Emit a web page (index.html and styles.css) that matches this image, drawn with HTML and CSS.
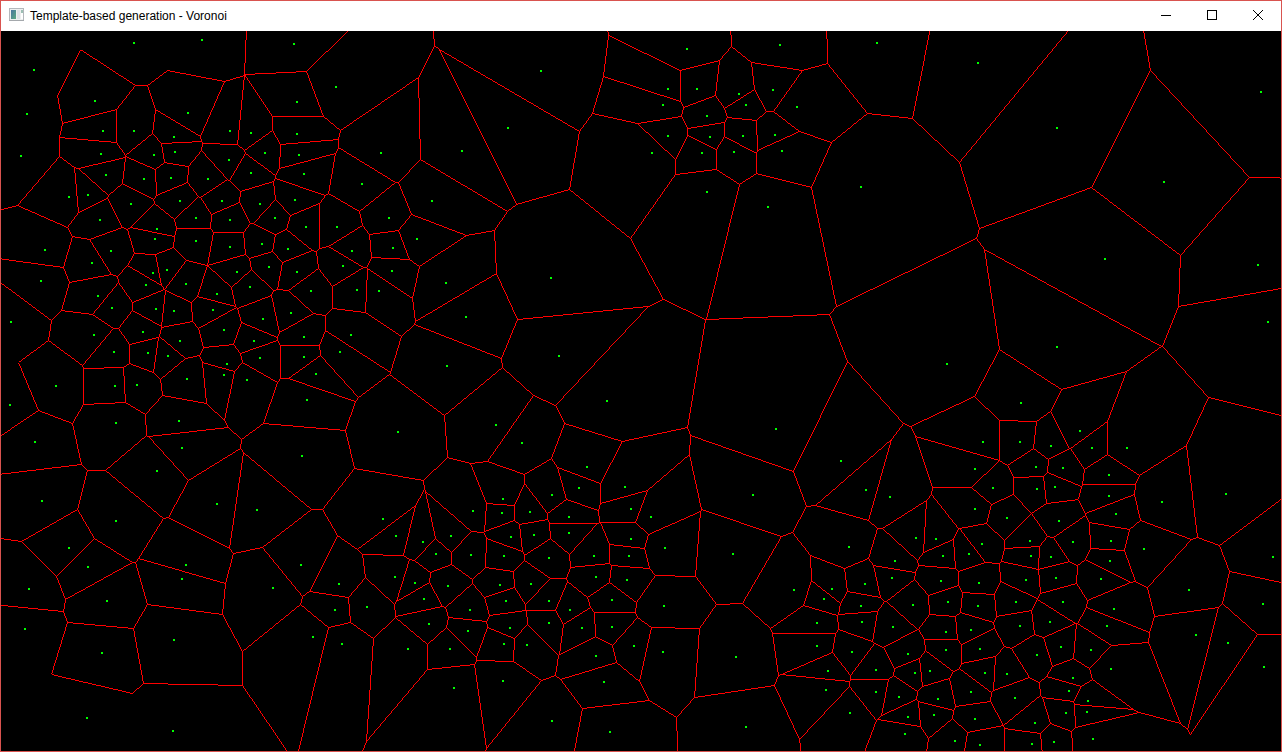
FILE: index.html
```html
<!DOCTYPE html>
<html lang="en">
<head>
<meta charset="utf-8">
<title>Template-based generation - Voronoi</title>
<link rel="stylesheet" href="styles.css">
</head>
<body>
<div class="window">
  <header class="titlebar">
    <svg class="app-icon" width="16" height="16" viewBox="0 0 16 16" aria-hidden="true">
      <defs>
        <linearGradient id="pane" x1="0" y1="0" x2="1" y2="1">
          <stop offset="0" stop-color="#4a74a0"/>
          <stop offset="1" stop-color="#5cab80"/>
        </linearGradient>
      </defs>
      <rect x="0.5" y="0.5" width="14" height="12" fill="#eef0f0" stroke="#b4b8bc"/>
      <rect x="0" y="12" width="15" height="1" fill="#a4a8ac"/>
      <rect x="2" y="2" width="5" height="9" fill="url(#pane)"/>
      <rect x="8" y="2" width="3" height="9" fill="#dfe2e6"/>
      <rect x="12" y="2" width="2" height="3" fill="#9dbfb4"/>
      <rect x="12" y="5" width="2" height="6" fill="#ffffff"/>
    </svg>
    <h1 class="title">Template-based generation - Voronoi</h1>
    <div class="controls">
      <button class="control" type="button" aria-label="Minimize">
        <svg width="10" height="10" viewBox="0 0 10 10" shape-rendering="crispEdges"><path d="M0 5.5H10" stroke="#000"/></svg>
      </button>
      <button class="control" type="button" aria-label="Maximize">
        <svg width="10" height="10" viewBox="0 0 10 10" shape-rendering="crispEdges"><rect x="0.5" y="0.5" width="9" height="9" fill="none" stroke="#000"/></svg>
      </button>
      <button class="control" type="button" aria-label="Close">
        <svg width="10" height="10" viewBox="0 0 10 10"><path d="M0 0L10 10M10 0L0 10" stroke="#000"/></svg>
      </button>
    </div>
  </header>
  <main class="stage">
    <svg class="diagram" id="diagram" role="img" aria-label="Voronoi diagram" shape-rendering="crispEdges">
      <path class="edges" id="edges"/>
      <path class="sites" id="sites"/>
    </svg>
  </main>
</div>
<script src="voronoi.js"></script>
</body>
</html>
```
FILE: styles.css
```css
* {
  box-sizing: border-box;
}

body {
  margin: 0;
  background: #000;
  font-family: "Liberation Sans", Arial, sans-serif;
}

.window {
  display: flex;
  flex-direction: column;
  height: 100vh;
  border: 1px solid #d9534f;
}

.titlebar {
  display: flex;
  align-items: center;
  height: 30px;
  flex: none;
  padding-left: 8px;
  background: #fff;
}

.app-icon {
  flex: none;
}

.title {
  flex: 1;
  margin: 0 0 0 5px;
  color: #000;
  font-size: 12px;
  font-weight: 400;
  line-height: 16px;
  white-space: nowrap;
}

.controls {
  display: flex;
  align-self: stretch;
}

.control {
  display: flex;
  align-items: center;
  justify-content: center;
  width: 46px;
  padding: 0 0 2px;
  border: 0;
  background: transparent;
}

.control:hover {
  background: #e5e5e5;
}

.stage {
  flex: 1;
  min-height: 0;
  background: #000;
}

.diagram {
  display: block;
  width: 100%;
  height: 100%;
}

.edges {
  fill: #f00;
}

.sites {
  fill: #0f0;
}
```
FILE: voronoi.js
```js
// Generator points, as x,y pairs in window coordinates.
const SITES = `
34,70 134,43 202,40 294,44 95,101 27,114 188,113 297,102 103,131 134,131 174,137 230,131
251,133 297,134 21,156 101,154 154,155 175,152 229,160 265,153 299,155 106,175 144,179
171,178 208,179 251,173 304,174 69,197 88,195 131,204 180,201 222,201 260,204 295,200
100,220 196,218 230,220 275,218 306,227 157,229 155,239 196,241 230,247 262,244 288,249
45,250
336,87 541,71 508,128 381,153 462,151 362,184 432,201 337,227 389,218 417,239 393,248
687,49 780,45 877,43 668,89 697,89 739,94 773,90 663,105 746,105 797,107 707,116 668,136
710,137 743,136 775,135 652,153 702,153 734,152 782,151 707,192 768,207 861,187
978,63 1057,128 1164,182 1261,92
111,251 92,263 41,281 98,296 112,308 11,322 94,335 114,352 56,386 115,386 137,385 10,405
35,442 116,423 167,270 153,273 146,285 186,284 156,309 174,311 143,332 148,353 168,356
180,341 187,379 179,421 182,448 157,471 217,294 213,310 224,330 227,364 224,375 247,380
237,272 269,267 250,287 297,272 311,291 263,319 291,313 254,341 260,358 304,337 304,357
316,374 307,400 302,456
352,251 343,266 392,271 357,290 379,291 446,283 551,278 466,317 351,335 340,352 447,366
559,356 607,401 398,432 496,425 522,443 587,467 579,488 625,487 552,495 503,499
776,429 841,461 753,495 866,490 890,497 947,364
1105,259 1258,265 1268,322 1057,347 1021,403 983,442 1020,442 1051,446 1080,431 1092,448
1127,448 975,469 1036,467 1063,468 1109,475 993,488 1037,489 1055,487 1109,496 1226,494
42,501 116,521 217,504 257,510 69,548 88,567 29,589 107,601 186,565 182,579 301,565
273,588 25,629 102,653 174,640 313,637 87,718 173,731
383,519 396,536 423,542 451,536 473,511 436,554 471,555 395,577 415,583 448,586 339,584
367,607 335,610 424,599 429,624 342,644 408,649 450,649 454,688 468,631 470,610 502,513
530,512 511,537 534,535 504,556 500,585 506,601 510,628 504,644 503,681 527,645 531,584
549,558 549,601 549,623 570,610 569,517 569,533 594,556 596,577 612,600 612,627 582,628
596,656 604,682 634,646 552,721 610,732 631,509 631,539 629,556 627,580
651,517 665,548 733,554 664,606 663,652 736,657 746,727 794,590 849,547 832,589 824,599
865,584 861,606 817,623 862,622 817,646 852,652 828,671 826,690 850,713 876,670 876,692
895,561 892,578 916,538 936,539 943,556 941,581 913,605 948,602 893,627 946,632 908,654
946,650 915,673 930,671 899,697 938,699 908,717 934,715 905,734 955,741
975,509 1007,518 1162,502 1059,521 1116,514 982,544 969,554 1030,541 1031,556 1051,557
1073,542 1111,541 1144,549 1110,561 979,583 1026,580 1056,578 1101,579 978,606 1016,602
1063,602 1114,609 971,630 1020,626 1050,622 1107,626 980,649 1037,655 1061,647 1091,650
1111,669 985,673 1007,674 971,692 1015,698 1073,678 1069,691 1088,701 1087,712 1066,713
975,719 1035,723 980,745 1032,744 1054,742 1093,739 1189,590 1196,635 1228,643 1263,604
1273,557 1264,667
`.trim().split(/\s+/).map(pair => pair.split(",").map(Number));

// Neighbours on the hull whose outer edge is left open.
const OPEN_PAIRS = new Set([
  "34,70|134,43",
  "134,43|202,40",
  "27,114|34,70",
  "21,156|27,114",
  "10,405|11,322",
  "25,629|87,718",
  "87,718|173,731",
  "1093,739|1264,667"
]);

const ORIGIN = { x: 1, y: 31 };
const FAR = 4000;

// Cuts a cell by the bisector of its site and another one.
// Each corner carries the index of the neighbour across the side that starts there.
function clip(cell, site, other, index) {
  const nx = other[0] - site[0];
  const ny = other[1] - site[1];
  const mid = (nx * (other[0] + site[0]) + ny * (other[1] + site[1])) / 2;
  const out = [];
  cell.forEach((a, i) => {
    const b = cell[(i + 1) % cell.length];
    const da = nx * a.x + ny * a.y - mid;
    const db = nx * b.x + ny * b.y - mid;
    if (da <= 0) out.push(a);
    if ((da <= 0) !== (db <= 0)) {
      const t = da / (da - db);
      out.push({
        x: a.x + t * (b.x - a.x),
        y: a.y + t * (b.y - a.y),
        id: da <= 0 ? index : a.id
      });
    }
  });
  return out;
}

function cellOf(i) {
  let cell = [
    { x: -FAR, y: -FAR, id: -1 },
    { x: FAR, y: -FAR, id: -1 },
    { x: FAR, y: FAR, id: -1 },
    { x: -FAR, y: FAR, id: -1 }
  ];
  SITES.forEach((other, j) => {
    if (j !== i) cell = clip(cell, SITES[i], other, j);
  });
  return cell;
}

const toPixel = p => ({ x: Math.floor(p.x - 1.6), y: Math.floor(p.y - 1.25) });

// A one-pixel line between two pixels, as a run of flat boxes.
function line(a, b) {
  const dx = b.x - a.x;
  const dy = b.y - a.y;
  const flat = Math.abs(dx) >= Math.abs(dy);
  const steps = Math.max(Math.abs(dx), Math.abs(dy));
  let path = "";
  let start = null;
  let size = 0;
  let row = null;
  const flush = () => {
    if (start === null) return;
    path += flat
      ? `M${start} ${row}h${size}v1h${-size}z`
      : `M${row} ${start}v${size}h1v${-size}z`;
  };
  const [from, to] = (flat ? dx : dy) >= 0 ? [a, b] : [b, a];
  for (let s = 0; s <= steps; s++) {
    const t = steps ? s / steps : 0;
    const along = (flat ? from.x : from.y) + s;
    const across = Math.round(flat
      ? from.y + t * (to.y - from.y)
      : from.x + t * (to.x - from.x));
    if (across !== row) {
      flush();
      start = along;
      row = across;
      size = 0;
    }
    size++;
  }
  flush();
  return path;
}

let edges = "";
SITES.forEach((site, i) => {
  const cell = cellOf(i);
  cell.forEach((a, k) => {
    if (a.id < i) return;
    const key = [site, SITES[a.id]].sort((p, q) => p[0] - q[0]).map(String).join("|");
    if (OPEN_PAIRS.has(key)) return;
    edges += line(toPixel(a), toPixel(cell[(k + 1) % cell.length]));
  });
});

document.getElementById("edges").setAttribute("d", edges);
document.getElementById("edges").setAttribute("fill-rule", "nonzero");
document.getElementById("sites").setAttribute(
  "d",
  SITES.map(([x, y]) => `M${x - 1} ${y - 1}h2v2h-2z`).join("")
);

const diagram = document.getElementById("diagram");
function fit() {
  const box = diagram.getBoundingClientRect();
  diagram.setAttribute("viewBox", `${ORIGIN.x} ${ORIGIN.y} ${box.width} ${box.height}`);
}
window.addEventListener("resize", fit);
fit();
```
